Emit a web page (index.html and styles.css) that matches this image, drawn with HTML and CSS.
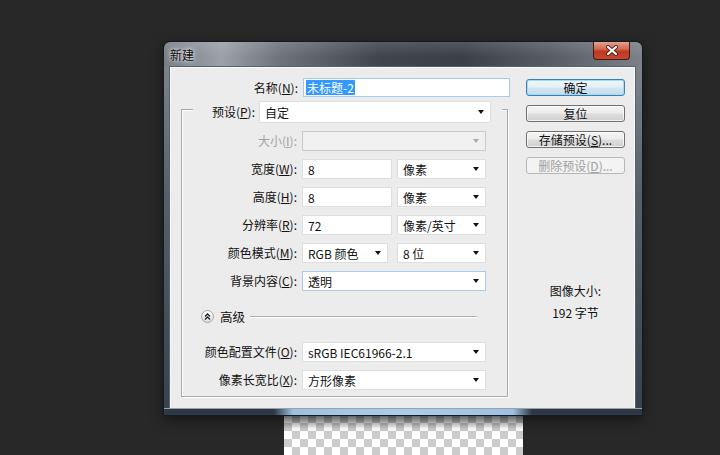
FILE: index.html
```html
<!DOCTYPE html>
<html lang="zh-CN">
<head>
    <meta charset="UTF-8">
    <title>新建</title>
    <link rel="stylesheet" href="styles.css">
</head>
<body>
    <div class="window">
        <div class="titlebar">
            <span class="title">新建</span>
            <span class="close">
                <svg width="14" height="11" viewBox="0 0 14 11">
                    <path d="M3 2 L11 9 M11 2 L3 9" stroke="#5a2018" stroke-width="4" stroke-linecap="round"/>
                    <path d="M3 2 L11 9 M11 2 L3 9" stroke="#fff" stroke-width="2.2" stroke-linecap="round"/>
                </svg>
            </span>
        </div>
        <div class="frame">
            <div class="client">
                <div class="main">
                    <div class="row name-row">
                        <label class="lbl">名称(<u>N</u>):</label>
                        <div class="field focus name-field"><span class="sel">未标题-2</span></div>
                    </div>

                    <div class="group">
                        <div class="group-head">
                            <label class="lbl head-lbl">预设(<u>P</u>):</label>
                            <div class="field select preset">自定<i class="arrow"></i></div>
                        </div>

                        <div class="row">
                            <label class="lbl off">大小(<u>I</u>):</label>
                            <div class="field select full disabled"><i class="arrow"></i></div>
                        </div>
                        <div class="row">
                            <label class="lbl">宽度(<u>W</u>):</label>
                            <div class="field num">8</div>
                            <div class="field select unit">像素<i class="arrow"></i></div>
                        </div>
                        <div class="row">
                            <label class="lbl">高度(<u>H</u>):</label>
                            <div class="field num">8</div>
                            <div class="field select unit">像素<i class="arrow"></i></div>
                        </div>
                        <div class="row">
                            <label class="lbl">分辨率(<u>R</u>):</label>
                            <div class="field num">72</div>
                            <div class="field select unit">像素/英寸<i class="arrow"></i></div>
                        </div>
                        <div class="row">
                            <label class="lbl">颜色模式(<u>M</u>):</label>
                            <div class="field select mode">RGB 颜色<i class="arrow"></i></div>
                            <div class="field select unit bits">8 位<i class="arrow"></i></div>
                        </div>
                        <div class="row">
                            <label class="lbl">背景内容(<u>C</u>):</label>
                            <div class="field select full focus">透明<i class="arrow"></i></div>
                        </div>

                        <div class="advanced">
                            <span class="toggle">
                                <svg width="7" height="7" viewBox="0 0 7 7">
                                    <path d="M1 3.5 L3.5 1 L6 3.5 M1 6.5 L3.5 4 L6 6.5" fill="none" stroke="#222" stroke-width="1.3"/>
                                </svg>
                            </span>
                            <span class="adv-text">高级</span>
                            <span class="adv-line"></span>
                        </div>

                        <div class="row profile">
                            <label class="lbl">颜色配置文件(<u>O</u>):</label>
                            <div class="field select full">sRGB IEC61966-2.1<i class="arrow"></i></div>
                        </div>
                        <div class="row">
                            <label class="lbl">像素长宽比(<u>X</u>):</label>
                            <div class="field select full">方形像素<i class="arrow"></i></div>
                        </div>
                    </div>
                </div>

                <div class="side">
                    <button class="btn default">确定</button>
                    <button class="btn">复位</button>
                    <button class="btn">存储预设(<u>S</u>)...</button>
                    <button class="btn" disabled>删除预设(<u>D</u>)...</button>
                    <div class="info">图像大小:</div>
                    <div class="info size">192 字节</div>
                </div>
            </div>
        </div>
    </div>
    <div class="checker"></div>
</body>
</html>
```

FILE: styles.css
```css
/* 页面 */
body {
    margin: 0;
    padding-top: 42px;
    background-color: #282828;
    font-family: "Noto Sans CJK SC", "DejaVu Sans", sans-serif;
    font-size: 12px;
    color: #111;
    overflow: hidden;
}

/* 窗口外框 */
.window {
    margin-left: 164px;
    width: 478px;
    border-radius: 6px 6px 2px 2px;
    box-shadow: 0 0 0 1px #16191d, 0 4px 14px rgba(0, 0, 0, 0.55);
    position: relative;
    z-index: 1;
}

.titlebar {
    height: 25px;
    display: flex;
    align-items: center;
    padding-left: 6px;
    border-radius: 6px 6px 0 0;
    background:
        linear-gradient(rgba(255, 255, 255, 0.12), rgba(255, 255, 255, 0) 60%),
        linear-gradient(90deg, #767d85 0%, #9ba1a7 12%, #6e747b 24%, #3f454c 45%, #3a4047 62%, #555b62 80%, #7b8188 100%);
}

.title {
    color: #0c0c0c;
    text-shadow: 0 0 6px rgba(255, 255, 255, 0.9), 0 0 3px rgba(255, 255, 255, 0.7);
}

.close {
    margin-left: auto;
    margin-right: 12px;
    align-self: flex-start;
    width: 37px;
    height: 18px;
    box-sizing: border-box;
    border: 1px solid #4a1810;
    border-top: none;
    border-radius: 0 0 4px 4px;
    background: linear-gradient(#e2a192 0%, #d46a52 40%, #bb3a22 55%, #c5492e 100%);
    display: flex;
    align-items: center;
    justify-content: center;
}

.frame {
    padding: 0 7px 6px 6px;
    border-radius: 0 0 2px 2px;
    background:
        linear-gradient(90deg, rgba(47, 58, 70, 0) 0, rgba(47, 58, 70, 0) 24%, rgba(160, 196, 230, 0) 25%, rgba(0, 0, 0, 0) 75%, rgba(47, 58, 70, 0) 76%),
        linear-gradient(#7c838b 0%, #58616b 35%, #36414d 100%);
    position: relative;
}

.frame::after {
    content: "";
    position: absolute;
    left: 0;
    right: 0;
    bottom: 0;
    height: 6px;
    background: linear-gradient(90deg, #2e3945 0%, #2e3945 23%, #9dc1e4 27%, #accdeb 50%, #9dc1e4 73%, #2e3945 77%, #2e3945 100%);
    border-top: 1px solid #9aa3ad;
}

/* 客户区 */
.client {
    height: 342px;
    background-color: #ececec;
    display: flex;
    padding: 0 0 0 11px;
    box-shadow: inset 0 0 0 1px #f8f8f8;
    outline: 1px solid #59636d;
}

.main {
    width: 329px;
    padding-top: 11px;
}

.row {
    display: flex;
    align-items: center;
    height: 20px;
    margin-top: 8px;
}

.lbl {
    width: 115px;
    margin-right: 5px;
    text-align: right;
    white-space: nowrap;
    line-height: 20px;
}

.lbl u {
    text-underline-offset: 1px;
}

.lbl.off {
    color: #a3a3a3;
}

.name-row {
    margin-top: 0;
    height: 19px;
}

.name-row .lbl {
    width: 117px;
}

/* 输入框与下拉框 */
.field {
    height: 100%;
    box-sizing: border-box;
    background-color: #fff;
    border: 1px solid #dedede;
    padding-left: 5px;
    display: flex;
    align-items: center;
    position: relative;
    white-space: nowrap;
}

.field.focus {
    border-color: #a7cbea;
}

.name-field {
    width: 207px;
    padding-left: 2px;
}

.sel {
    background-color: #3399ff;
    color: #fff;
    padding: 0 1px;
    line-height: 15px;
}

.arrow {
    position: absolute;
    right: 6px;
    top: 50%;
    margin-top: -2px;
    border-style: solid;
    border-width: 4px 3.5px 0;
    border-color: #111 transparent transparent;
}

.full {
    width: 184px;
}

.num {
    width: 90px;
}

.unit {
    width: 89px;
    margin-left: 5px;
}

.mode {
    width: 86px;
}

.bits {
    margin-left: 9px;
}

.disabled {
    background-color: #f0f0f0;
    border-color: #c9c9c9;
}

.disabled .arrow {
    border-top-color: #a9a9a9;
}

/* 预设分组框 */
.group {
    width: 325px;
    margin-top: 12px;
    border: 1px solid #a9a9a9;
    box-shadow: inset 1px 1px 0 #fff, 1px 1px 0 #fff;
    padding-bottom: 6px;
}

.group-head {
    display: flex;
    align-items: center;
    height: 22px;
    width: 309px;
    margin: -9px 0 0 11px;
    background-color: #ececec;
}

.head-lbl {
    width: 62px;
    margin-right: 4px;
}

.preset {
    width: 232px;
}

.advanced {
    display: flex;
    align-items: center;
    height: 19px;
    margin-top: 16px;
    padding: 0 30px 0 19px;
}

.toggle {
    width: 13px;
    height: 13px;
    box-sizing: border-box;
    border: 1px solid #a5a5a5;
    border-radius: 50%;
    background: linear-gradient(#ffffff, #dcdcdc);
    display: flex;
    align-items: center;
    justify-content: center;
}

.adv-text {
    margin-left: 6px;
    font-size: 12.5px;
}

.adv-line {
    flex: 1;
    margin-left: 5px;
    height: 1px;
    background-color: #adadad;
    box-shadow: 0 1px 0 #fff;
}

.profile {
    margin-top: 16px;
}

/* 右侧按钮 */
.side {
    margin-left: 16px;
    width: 99px;
    padding-top: 12px;
    display: flex;
    flex-direction: column;
}

.btn {
    height: 17px;
    margin-bottom: 9px;
    padding: 0;
    font-family: inherit;
    font-size: 12px;
    line-height: 15px;
    color: #111;
    border: 1px solid #707070;
    border-radius: 3px;
    background: linear-gradient(#f4f4f4 0%, #ececec 48%, #dedede 52%, #d0d0d0 100%);
    box-shadow: inset 0 0 0 1px rgba(255, 255, 255, 0.7);
}

.btn.default {
    border-color: #3c7fb1;
    box-shadow: inset 0 0 0 1px #9fdcf7;
    background: linear-gradient(#eef7fc 0%, #e4f1f9 48%, #d2e6f2 52%, #c4dcec 100%);
}

.btn:disabled {
    color: #a0a0a0;
    border-color: #b5b8ba;
    background: #f3f3f3;
    box-shadow: none;
}

.info {
    text-align: center;
    line-height: 16px;
    margin-top: 100px;
}

.info.size {
    margin-top: 6px;
}

/* 透明背景棋盘格 */
.checker {
    margin-left: 284px;
    width: 239px;
    height: 60px;
    background-image:
        linear-gradient(rgba(0, 0, 0, 0.4), rgba(0, 0, 0, 0) 14px),
        conic-gradient(#cccccc 25%, #ffffff 0 50%, #cccccc 0 75%, #ffffff 0);
    background-size: 100% 100%, 16px 16px;
}
```
